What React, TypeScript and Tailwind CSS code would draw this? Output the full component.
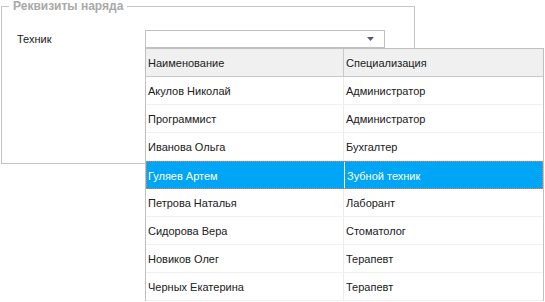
import React from 'react';

const ROWS = [
  { name: 'Акулов Николай', spec: 'Администратор' },
  { name: 'Программист', spec: 'Администратор' },
  { name: 'Иванова Ольга', spec: 'Бухгалтер' },
  { name: 'Гуляев Артем', spec: 'Зубной техник', selected: true },
  { name: 'Петрова Наталья', spec: 'Лаборант' },
  { name: 'Сидорова Вера', spec: 'Стоматолог' },
  { name: 'Новиков Олег', spec: 'Терапевт' },
  { name: 'Черных Екатерина', spec: 'Терапевт' },
];

export default function App() {
  return (
    <div
      className="relative w-[545px] h-[302px] bg-white overflow-hidden text-[11px] text-[#202020]"
      style={{ fontFamily: 'Tahoma, "Liberation Sans", sans-serif' }}
    >
      <fieldset className="ml-[1px] w-[414px] h-[164px] border border-[#c4c4c4]">
        <legend className="ml-[7px] px-[4px] text-[12px] font-bold text-[#a9a9a9] leading-[13px]">Реквизиты наряда</legend>
        <div className="flex items-center mt-[17px]">
          <span className="ml-[15px] w-[128px]">Техник</span>
          <div className="w-[240px] h-[18px] border border-[#c0c0c0] bg-white flex items-center justify-end pr-[10px]">
            <svg width="7" height="4" viewBox="0 0 7 4">
              <path d="M0 0 H7 L3.5 4 Z" fill="#5a5a6e" />
            </svg>
          </div>
        </div>
      </fieldset>

      {/* dropdown popup */}
      <div className="absolute left-[145px] top-[48px] w-[399px] h-[253px] border border-[#c0c0c0] bg-white">
        <div className="grid grid-cols-[198px_1fr] h-[28px] bg-[#f0f0f0] border-b border-[#c8c8c8]">
          <div className="flex items-center pl-[2px] pt-[2px] border-r border-[#c8c8c8]">Наименование</div>
          <div className="flex items-center pl-[2px] pt-[2px]">Специализация</div>
        </div>
        {ROWS.map((r) =>
          r.selected ? (
            <div
              key={r.name}
              className="grid grid-cols-[198px_1fr] h-[28px] bg-[#00a6f5] text-white border border-dotted border-[#f08040]"
            >
              <div className="flex items-center pl-[1px] pt-[2px] border-r border-white">{r.name}</div>
              <div className="flex items-center pl-[2px] pt-[2px]">{r.spec}</div>
            </div>
          ) : (
            <div key={r.name} className="grid grid-cols-[198px_1fr] h-[28px] border-b border-[#f0f0f0]">
              <div className="flex items-center pl-[2px] pt-[2px] border-r border-[#ececec]">{r.name}</div>
              <div className="flex items-center pl-[2px] pt-[2px]">{r.spec}</div>
            </div>
          )
        )}
      </div>
    </div>
  );
}
